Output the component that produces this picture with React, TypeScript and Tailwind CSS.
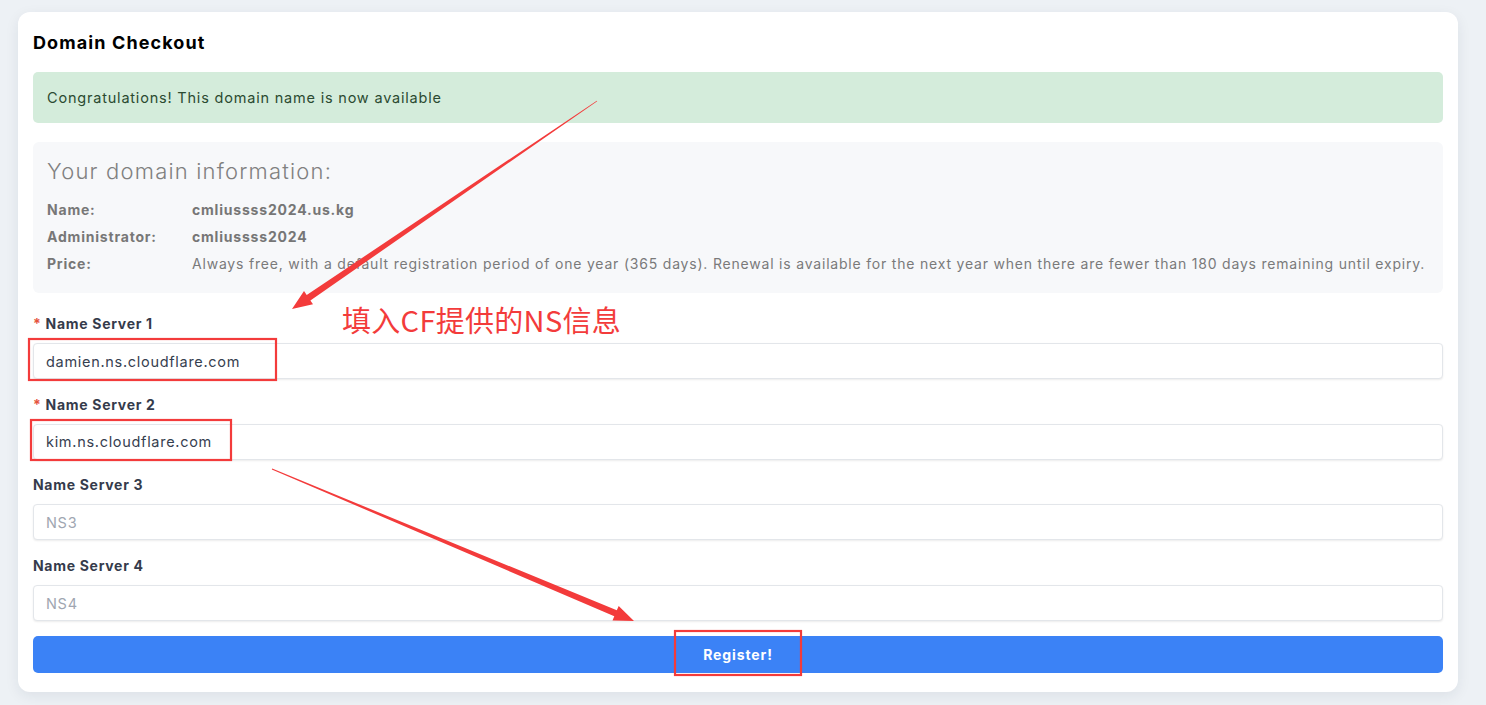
import React from 'react'

const font = { fontFamily: 'Inter, "Noto Sans", sans-serif' }

const info = [
  { label: 'Name:', value: 'cmliussss2024.us.kg', bold: true },
  { label: 'Administrator:', value: 'cmliussss2024', bold: true },
  {
    label: 'Price:',
    value:
      'Always free, with a default registration period of one year (365 days). Renewal is available for the next year when there are fewer than 180 days remaining until expiry.',
    bold: false,
  },
]

const servers = [
  { label: 'Name Server 1', required: true, value: 'damien.ns.cloudflare.com', placeholder: 'NS1' },
  { label: 'Name Server 2', required: true, value: 'kim.ns.cloudflare.com', placeholder: 'NS2' },
  { label: 'Name Server 3', required: false, value: '', placeholder: 'NS3' },
  { label: 'Name Server 4', required: false, value: '', placeholder: 'NS4' },
]

// tapered annotation arrow, thin at the tail and thick near the head
function arrowPoints(x1: number, y1: number, x2: number, y2: number, tail: number, shaft: number, headLen: number, headW: number) {
  const dx = x2 - x1
  const dy = y2 - y1
  const len = Math.hypot(dx, dy)
  const ux = dx / len
  const uy = dy / len
  const nx = -uy
  const ny = ux
  const bx = x2 - ux * headLen
  const by = y2 - uy * headLen
  const pts = [
    [x1 + nx * tail / 2, y1 + ny * tail / 2],
    [bx + nx * shaft / 2, by + ny * shaft / 2],
    [bx + nx * headW / 2, by + ny * headW / 2],
    [x2, y2],
    [bx - nx * headW / 2, by - ny * headW / 2],
    [bx - nx * shaft / 2, by - ny * shaft / 2],
    [x1 - nx * tail / 2, y1 - ny * tail / 2],
  ]
  return pts.map((p) => p.map((v) => v.toFixed(1)).join(',')).join(' ')
}

function Annotations() {
  return (
    <svg className="pointer-events-none absolute left-0 top-0" width="1486" height="705" viewBox="0 0 1486 705">
      <polygon points={arrowPoints(597, 101, 292, 309, 0.8, 6.5, 20, 16)} fill="#f33b3b" />
      <polygon points={arrowPoints(272, 469, 634, 621, 0.8, 6.5, 20, 16)} fill="#f33b3b" />
      <rect x="29" y="339" width="247" height="41" fill="none" stroke="#f33b3b" strokeWidth="2.2" />
      <rect x="31" y="420" width="200" height="40" fill="none" stroke="#f33b3b" strokeWidth="2.2" />
      <rect x="675" y="631" width="126" height="44" fill="none" stroke="#f33b3b" strokeWidth="2.2" />
    </svg>
  )
}

export default function App() {
  return (
    <div className="relative min-h-screen bg-[#edf1f5] pb-[13px] pl-[18px] pr-[28px] pt-[12px]" style={font}>
      <div className="rounded-[12px] bg-white px-[15px] pb-[19px] pt-[19px] shadow-[0_4px_14px_rgba(30,41,59,0.08)]">
        <h1 className="mb-[17px] text-[18px] font-bold leading-[24px] tracking-[1.1px] text-black">Domain Checkout</h1>

        <div className="rounded-[5px] bg-[#d4ecdb] px-[14px] py-[15px] text-[14.5px] leading-[21px] tracking-[0.8px] text-[#2b4a31]">
          Congratulations! This domain name is now available
        </div>

        <div className="mt-[19px] rounded-[6px] bg-[#f7f8fa] px-[14px] pb-[16px] pt-[16px] text-[#757575]">
          <h2 className="mb-[11px] text-[22px] font-light leading-[27px] tracking-[1.2px] text-[#808080]">
            Your domain information:
          </h2>
          {info.map((row) => (
            <div key={row.label} className="flex text-[14px] leading-[27px] tracking-[0.8px]">
              <span className="w-[145px] shrink-0 font-bold text-[#777777]">{row.label}</span>
              <span className={row.bold ? 'font-bold text-[#767676]' : 'text-[#7a7a7a]'}>{row.value}</span>
            </div>
          ))}
        </div>

        <div className="mt-[21px] flex flex-col gap-[15.7px]">
          {servers.map((s) => (
            <div key={s.label}>
              <label className="mb-[9px] block text-[14px] font-bold leading-[20px] tracking-[0.7px] text-[#353b4b]">
                {s.required && <span className="text-[#e5533d]">* </span>}
                {s.label}
              </label>
              <input
                readOnly
                value={s.value}
                placeholder={s.placeholder}
                className="block h-[36px] w-full rounded-[4px] border border-[#e3e6ea] bg-white px-[12px] text-[14.5px] tracking-[0.7px] text-[#36404f] shadow-[0_1px_2px_rgba(0,0,0,0.08)] outline-none placeholder:text-[#a0a6b1]"
              />
            </div>
          ))}
        </div>

        <button className="mt-[15px] block h-[37px] w-full rounded-[5px] bg-[#3b82f6] text-[14px] font-bold tracking-[0.9px] text-white">
          Register!
        </button>
      </div>

      <Annotations />
      <div
        className="pointer-events-none absolute left-[342px] top-[301px] text-[29px] font-normal leading-[37px] tracking-[0.3px] text-[#f33b3b]"
        style={{ fontFamily: '"Noto Sans CJK SC", "Noto Sans", sans-serif' }}
      >
        填入CF提供的NS信息
      </div>
    </div>
  )
}
